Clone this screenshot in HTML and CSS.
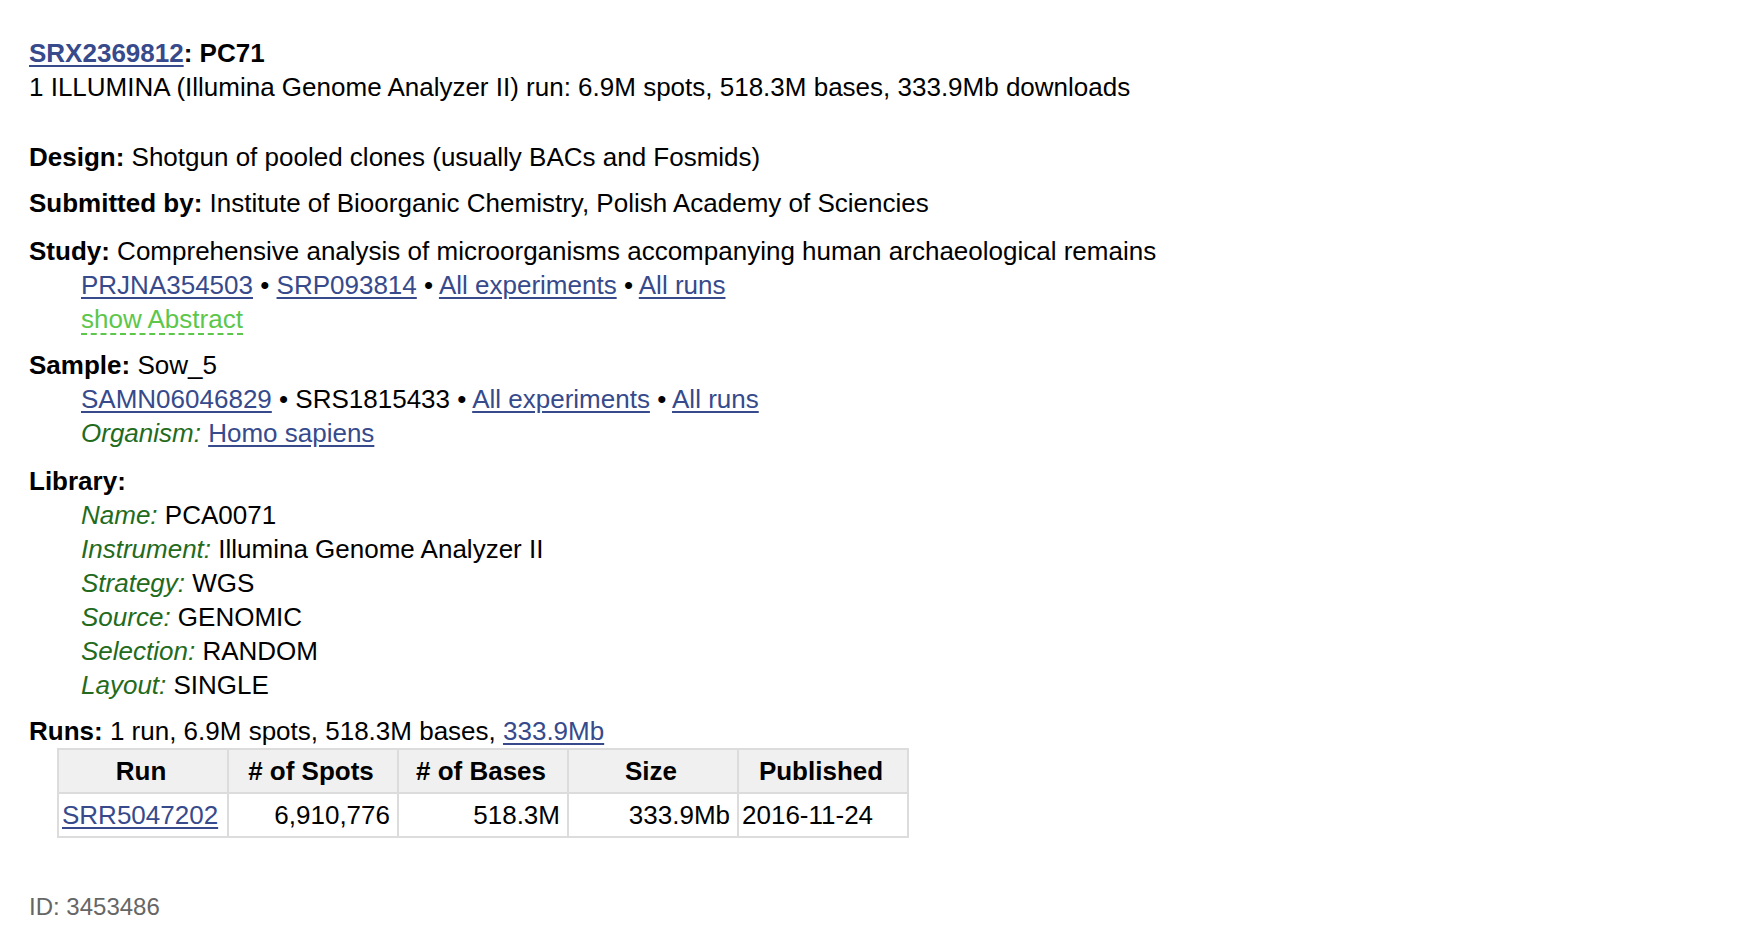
FILE: index.html
```html
<!DOCTYPE html>
<html>
<head>
<meta charset="utf-8">
<link rel="stylesheet" href="styles.css">
</head>
<body>
<div class="page">
  <div class="title"><a href="#">SRX2369812</a>: PC71</div>
  <div class="summary">1 ILLUMINA (Illumina Genome Analyzer II) run: 6.9M spots, 518.3M bases, 333.9Mb downloads</div>

  <div class="sect first"><b>Design:</b> Shotgun of pooled clones (usually BACs and Fosmids)</div>
  <div class="sect"><b>Submitted by:</b> Institute of Bioorganic Chemistry, Polish Academy of Sciencies</div>
  <div class="sect wide">
    <div><b>Study:</b> Comprehensive analysis of microorganisms accompanying human archaeological remains</div>
    <div class="sub">
      <div><a href="#">PRJNA354503</a> • <a href="#">SRP093814</a> • <a href="#">All experiments</a> • <a href="#">All runs</a></div>
      <div><span class="abstract">show Abstract</span></div>
    </div>
  </div>
  <div class="sect">
    <div><b>Sample:</b> Sow_5</div>
    <div class="sub">
      <div><a href="#">SAMN06046829</a> • SRS1815433 • <a href="#">All experiments</a> • <a href="#">All runs</a></div>
      <div><i>Organism:</i> <a href="#">Homo sapiens</a></div>
    </div>
  </div>
  <div class="sect wide">
    <div><b>Library:</b></div>
    <div class="sub">
      <div><i>Name:</i> PCA0071</div>
      <div><i>Instrument:</i> Illumina Genome Analyzer II</div>
      <div><i>Strategy:</i> WGS</div>
      <div><i>Source:</i> GENOMIC</div>
      <div><i>Selection:</i> RANDOM</div>
      <div><i>Layout:</i> SINGLE</div>
    </div>
  </div>
  <div class="sect">
    <div><b>Runs:</b> 1 run, 6.9M spots, 518.3M bases, <a href="#">333.9Mb</a></div>
    <table class="runs">
      <thead>
        <tr><th>Run</th><th># of Spots</th><th># of Bases</th><th>Size</th><th>Published</th></tr>
      </thead>
      <tbody>
        <tr><td class="l"><a href="#">SRR5047202</a></td><td>6,910,776</td><td>518.3M</td><td>333.9Mb</td><td class="l">2016-11-24</td></tr>
      </tbody>
    </table>
  </div>
  <div class="id">ID: 3453486</div>
</div>
</body>
</html>
```

FILE: styles.css
```css
html, body {
  margin: 0;
  padding: 0;
  background: #fff;
}
body {
  font-family: "Liberation Sans", Arial, sans-serif;
  font-size: 26px;
  line-height: 34px;
  color: #000;
}
.page {
  padding: 36px 29px 0 29px;
}
a {
  color: #364a8c;
  text-decoration: underline;
  text-underline-offset: 3px;
}
.title {
  font-weight: bold;
}
.summary {
  margin-bottom: 36px;
}
.sect {
  margin-top: 12px;
}
.sect.wide {
  margin-top: 14px;
}
.sect.first {
  margin-top: 0;
}
.sub {
  padding-left: 52px;
}
i {
  color: #236b1c;
}
.abstract {
  color: #5cc74b;
  border-bottom: 2px dashed #5cc74b;
  line-height: 28px;
  display: inline-block;
}
.runs {
  margin-left: 28px;
  border-collapse: collapse;
  border: 2px solid #dcdcdc;
  line-height: 30px;
  table-layout: fixed;
  width: 852px;
}
.runs th, .runs td {
  border: 2px solid #dcdcdc;
  padding: 6px 7px 6px 3px;
}
.runs th {
  background: #f0f0f0;
  font-weight: bold;
  text-align: center;
}
.runs td {
  text-align: right;
}
.runs td.l {
  text-align: left;
}
.id {
  margin-top: 52px;
  color: #666;
  font-size: 24px;
}
```
